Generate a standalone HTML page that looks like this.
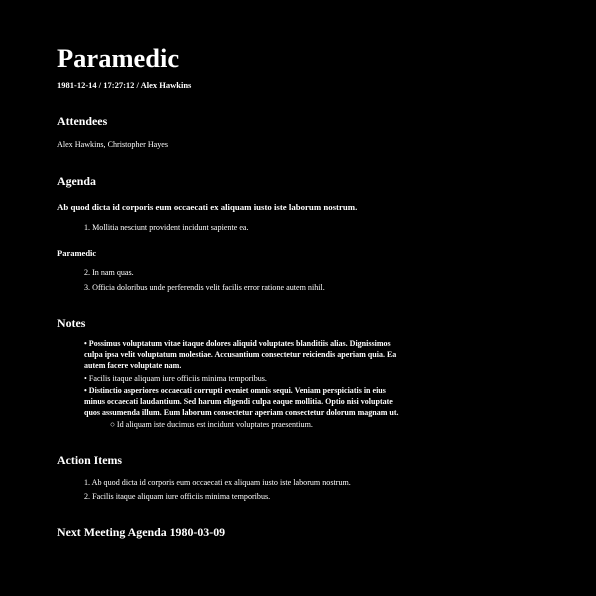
<!DOCTYPE html>
<html><head><style>
html,body{margin:0;background:#000;width:596px;height:596px;overflow:hidden}
body{position:relative;font-family:"Liberation Serif",serif;color:#fff}
.l{position:absolute;white-space:nowrap;line-height:12px;font-size:8.1px;transform:translateY(-6px)}
.b{font-weight:bold;font-size:8.02px}
.h{font-size:11.9px;font-weight:bold;line-height:16px;transform:translateY(-8px)}
.t{font-size:26.5px;font-weight:bold;line-height:32px;transform:translateY(-16px)}
</style></head><body>
<div class="l t" style="left:57px;top:58px">Paramedic</div>
<div class="l b" style="left:57px;top:85px;font-size:8.5px">1981-12-14 / 17:27:12 / Alex Hawkins</div>
<div class="l h" style="left:57px;top:121px">Attendees</div>
<div class="l" style="left:57px;top:145px">Alex Hawkins, Christopher Hayes</div>
<div class="l h" style="left:57px;top:181px">Agenda</div>
<div class="l b" style="left:57px;top:207px;font-size:8.8px">Ab quod dicta id corporis eum occaecati ex aliquam iusto iste laborum nostrum.</div>
<div class="l" style="left:84px;top:228px">1. Mollitia nesciunt provident incidunt sapiente ea.</div>
<div class="l b" style="left:57px;top:253px;font-size:8.5px">Paramedic</div>
<div class="l" style="left:84px;top:273px">2. In nam quas.</div>
<div class="l" style="left:84px;top:288px">3. Officia doloribus unde perferendis velit facilis error ratione autem nihil.</div>
<div class="l h" style="left:57px;top:323px">Notes</div>
<div class="l b" style="left:84px;top:344px">• Possimus voluptatum vitae itaque dolores aliquid voluptates blanditiis alias. Dignissimos</div>
<div class="l b" style="left:84px;top:355px">culpa ipsa velit voluptatum molestiae. Accusantium consectetur reiciendis aperiam quia. Ea</div>
<div class="l b" style="left:84px;top:366px">autem facere voluptate nam.</div>
<div class="l" style="left:84px;top:379px">• Facilis itaque aliquam iure officiis minima temporibus.</div>
<div class="l b" style="left:84px;top:391px">• Distinctio asperiores occaecati corrupti eveniet omnis sequi. Veniam perspiciatis in eius</div>
<div class="l b" style="left:84px;top:402px">minus occaecati laudantium. Sed harum eligendi culpa eaque mollitia. Optio nisi voluptate</div>
<div class="l b" style="left:84px;top:413px">quos assumenda illum. Eum laborum consectetur aperiam consectetur dolorum magnam ut.</div>
<div class="l" style="left:110px;top:425px">○ Id aliquam iste ducimus est incidunt voluptates praesentium.</div>
<div class="l h" style="left:57px;top:460px">Action Items</div>
<div class="l" style="left:84px;top:483px">1. Ab quod dicta id corporis eum occaecati ex aliquam iusto iste laborum nostrum.</div>
<div class="l" style="left:84px;top:497px">2. Facilis itaque aliquam iure officiis minima temporibus.</div>
<div class="l h" style="left:57px;top:532px">Next Meeting Agenda 1980-03-09</div>
</body></html>
